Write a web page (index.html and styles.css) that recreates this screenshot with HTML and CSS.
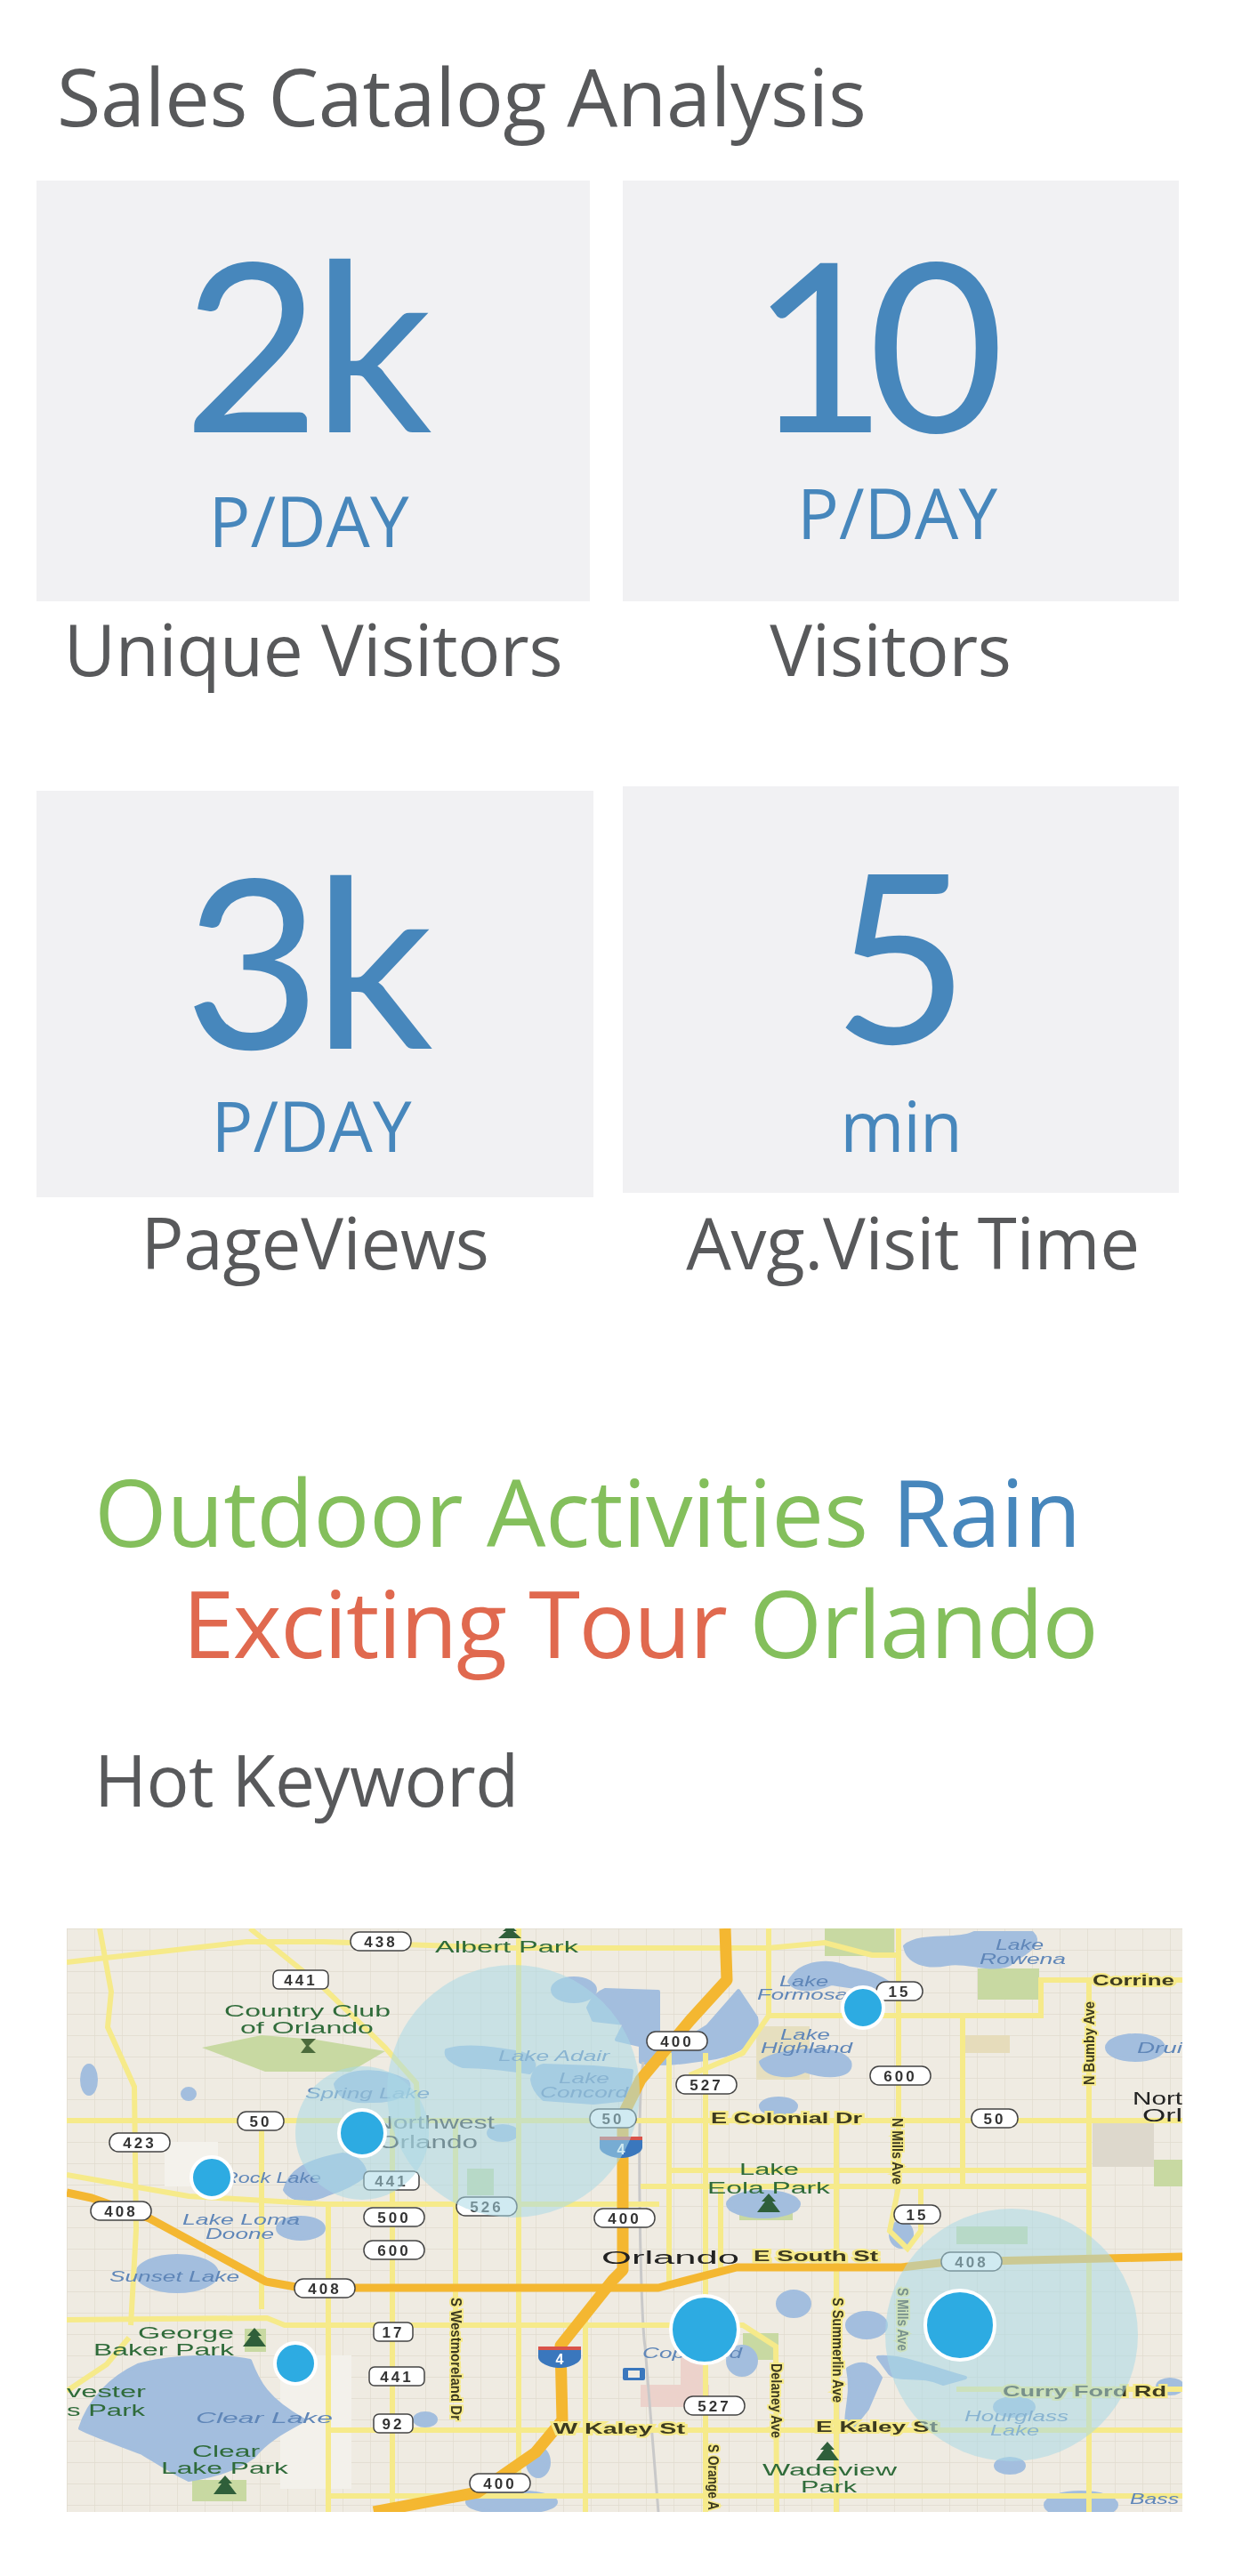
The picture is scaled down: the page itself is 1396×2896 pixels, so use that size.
FILE: index.html
```html
<!DOCTYPE html>
<html lang="en">

<head>
    <meta charset="UTF-8">
    <title>Sales Catalog Analysis</title>
    <link rel="stylesheet" href="styles.css">
</head>

<body>
    <h1 class="page-title">Sales Catalog Analysis</h1>

    <section class="stats-row">
        <div class="stat col-left">
            <div class="stat-box box-a">
                <div class="num num-two">2k</div>
                <div class="unit unit-a">P/DAY</div>
            </div>
            <div class="stat-label">Unique Visitors</div>
        </div>
        <div class="stat col-right">
            <div class="stat-box box-b">
                <div class="num num-ten">10</div>
                <div class="unit unit-b">P/DAY</div>
            </div>
            <div class="stat-label label-visitors">Visitors</div>
        </div>
    </section>

    <section class="stats-row row-2">
        <div class="stat col-left">
            <div class="stat-box box-c">
                <div class="num num-three">3k</div>
                <div class="unit unit-c">P/DAY</div>
            </div>
            <div class="stat-label label-c">PageViews</div>
        </div>
        <div class="stat col-right">
            <div class="stat-box box-d">
                <div class="num num-five">5</div>
                <div class="unit unit-d">min</div>
            </div>
            <div class="stat-label label-d">Avg.Visit Time</div>
        </div>
    </section>

    <section class="keywords">
        <div class="kw-line"><span class="green">Outdoor Activities</span> <span class="blue">Rain</span></div>
        <div class="kw-line kw-line-2"><span class="red">Exciting Tour</span> <span class="green">Orlando</span></div>
    </section>
    <h2 class="section-title">Hot Keyword</h2>

    <div class="map">
        <svg class="map-svg" viewBox="0 0 1254 656" width="1254" height="656">
            <defs>
                <pattern id="minor" width="31" height="24" patternUnits="userSpaceOnUse">
                    <path d="M0 0H31M0 0V24" stroke="#dcd6c8" stroke-width="1.4" fill="none" />
                </pattern>
            </defs>
            <g class="map-base">
                <rect width="1254" height="656" fill="#efebe2" />
                <rect width="1254" height="656" fill="url(#minor)" opacity=".75" />

                <!-- parks and areas -->
                <path class="park" d="M152 134L219 120L280 125L358 138L319 161L223 161Z" />
                <rect class="park" x="1024" y="45" width="69" height="35" />
                <rect class="park" x="852" y="0" width="78" height="31" />
                <rect class="park" x="141" y="620" width="61" height="24" />
                <rect class="park" x="200" y="450" width="24" height="26" />
                <rect class="park" x="756" y="300" width="60" height="28" />
                <rect class="park" x="450" y="270" width="30" height="30" />
                <rect class="park" x="1222" y="260" width="32" height="30" />
                <rect class="park" x="760" y="455" width="40" height="30" />
                <rect class="park" x="1000" y="335" width="80" height="20" />
                <rect x="1153" y="214" width="69" height="54" fill="#ddd8cc" />
                <rect x="645" y="513" width="77" height="25" fill="#ecd2cb" />
                <rect x="690" y="480" width="30" height="40" fill="#ecd2cb" />
                <rect x="775" y="110" width="60" height="60" fill="#e6dfbf" />
                <rect x="1010" y="120" width="50" height="20" fill="#e6dcbb" />
                <rect x="110" y="240" width="60" height="50" fill="#f4f2ec" />
                <rect x="240" y="480" width="80" height="150" fill="#f3f1eb" />

                <!-- lakes -->
                <path class="lake" d="M15 562C25 530 50 505 80 491C110 482 170 478 206 486C215 510 225 530 267 553C245 565 225 575 210 594C195 605 170 615 137 620C120 612 105 602 85 590C60 580 35 572 15 562Z" />
                <path class="lake" d="M245 294C250 275 265 262 310 254C325 255 335 265 336 277C320 290 305 295 295 298C280 305 255 310 245 294Z" />
                <path class="lake" d="M302 175C310 160 350 155 383 172C390 185 370 195 340 194C320 195 305 190 302 175Z" />
                <path class="lake" d="M427 137C450 130 480 135 510 140C525 145 530 155 520 162C495 158 470 155 445 155C432 150 425 145 427 137Z" />
                <path class="lake" d="M523 170C525 160 530 155 536 154L592 156L635 160L631 192L592 196L536 192C528 185 524 178 523 170Z" />
                <path class="lake" d="M586 89C590 80 597 72 605 69L665 71V136L618 125L627 107L592 103Z" />
                <ellipse class="lake" cx="570" cy="69" rx="24" ry="13" />
                <ellipse class="lake" cx="263" cy="337" rx="26" ry="12" />
                <ellipse class="lake" cx="124" cy="388" rx="45" ry="20" />
                <path class="lake" d="M812 60C825 35 860 35 880 45C905 50 915 55 925 62C900 70 880 65 860 62C840 70 820 72 812 60Z" />
                <path class="lake" d="M645 100L680 135L720 110L755 70L775 100C780 125 755 140 730 145C700 150 665 155 645 150Z" />
                <path class="lake" d="M780 150C800 135 870 130 880 150C885 165 860 170 830 160C810 170 785 165 780 150Z" />
                <path class="lake" d="M942 20C960 5 1000 15 1020 5L1085 5C1100 20 1070 30 1060 40C1040 50 1010 35 990 40C965 45 945 38 942 20Z" />
                <ellipse class="lake" cx="1201" cy="134" rx="32" ry="14" />
                <ellipse class="lake" cx="783" cy="310" rx="40" ry="14" />
                <ellipse class="lake" cx="817" cy="422" rx="18" ry="14" />
                <ellipse class="lake" cx="899" cy="446" rx="22" ry="14" />
                <path class="lake" d="M878 495C895 485 905 490 915 505L900 540L880 565C870 550 885 530 878 495Z" />
                <path class="lake" d="M912 482C935 480 960 490 1010 505L985 512C960 500 935 510 925 500Z" />
                <ellipse class="lake" cx="1065" cy="538" rx="22" ry="10" />
                <ellipse class="lake" cx="759" cy="486" rx="16" ry="16" />
                <ellipse class="lake" cx="938" cy="344" rx="12" ry="14" />
                <ellipse class="lake" cx="490" cy="230" rx="16" ry="8" />
                <ellipse class="lake" cx="403" cy="552" rx="12" ry="7" />
                <ellipse class="lake" cx="800" cy="200" rx="20" ry="9" />
                <ellipse class="lake" cx="1140" cy="648" rx="40" ry="14" />
                <ellipse class="lake" cx="530" cy="600" rx="12" ry="16" />
                <ellipse class="lake" cx="1240" cy="515" rx="14" ry="8" />
                <ellipse class="lake" cx="500" cy="645" rx="50" ry="12" />
                <ellipse class="lake" cx="1060" cy="604" rx="16" ry="8" />
                <ellipse class="lake" cx="25" cy="170" rx="8" ry="16" />
                <ellipse class="lake" cx="137" cy="186" rx="7" ry="6" />

                <path class="rail" d="M648 150C640 200 645 440 650 470L665 656" />

                <!-- streets -->
                <g class="road">
                    <path d="M0 216H1254" />
                    <path d="M0 38L202 15L289 15L501 22H789L852 16L905 30H935" />
                    <path d="M37 0L50 71L46 111L76 178L78 339L72 446" />
                    <path d="M206 0L289 67L358 134L393 174L395 214" />
                    <path d="M0 277L137 301L289 310H666" />
                    <path d="M219 216V428" />
                    <path d="M294 310V656" />
                    <path d="M366 216V656" />
                    <path d="M437 216V440" />
                    <path d="M508 0V620" />
                    <path d="M583 440V656" />
                    <path d="M0 440L225 438L245 446H760L797 470L798 656" />
                    <path d="M297 564H1254" />
                    <path d="M297 638H1254" />
                    <path d="M677 140V400" />
                    <path d="M718 140V656" />
                    <path d="M735 290V385" />
                    <path d="M789 0V98L760 140L700 165" />
                    <path d="M865 216V656" />
                    <path d="M935 0V290L925 340L945 360L960 340V290" />
                    <path d="M1007 98V290" />
                    <path d="M1149 58V656" />
                    <path d="M789 98H1095V58H1254" />
                    <path d="M680 272H1150" />
                    <path d="M645 290H1150" />
                    <path d="M1000 518H1254" />
                    <path d="M0 520L45 490L70 460" />
                </g>

                <!-- highways -->
                <g class="highway">
                    <path class="hw-cross" d="M0 297L28 303L93 326L224 397L263 404H665L753 381H938L990 375L1254 369" />
                    <path class="hw-north" d="M740 0L742 58L701 103L645 170L625 210V384L614 395L555 469L557 553L527 589L462 634L345 656" />
                </g>

                <!-- trees and small icons -->
                <g class="tree">
                    <path d="M211 449L219 458H215L224 470H198L207 458H203Z" />
                    <path d="M178 615L186 624H182L191 636H165L174 624H170Z" />
                    <path d="M789 298L797 307H793L802 319H776L785 307H781Z" />
                    <path d="M855 577L863 586H859L868 598H842L851 586H847Z" />
                    <path d="M498 -4L506 3H502L511 11H485L494 3H490Z" />
                </g>
                <path d="M263 124H280L272 132L280 140H263L269 132Z" fill="#4c6b3c" />
                <rect x="625" y="494" width="25" height="14" rx="2" fill="#3a77bd" />
                <rect x="631" y="497" width="13" height="8" fill="#efebe2" />

                <!-- water labels -->
                <g class="lbl-water">
                    <text x="485" y="149" textLength="125" lengthAdjust="spacingAndGlyphs">Lake Adair</text>
                    <text x="553" y="174" textLength="57" lengthAdjust="spacingAndGlyphs">Lake</text>
                    <text x="532" y="190" textLength="99" lengthAdjust="spacingAndGlyphs">Concord</text>
                    <text x="268" y="191" textLength="140" lengthAdjust="spacingAndGlyphs">Spring Lake</text>
                    <text x="176" y="286" textLength="110" lengthAdjust="spacingAndGlyphs">Rock Lake</text>
                    <text x="130" y="333" textLength="132" lengthAdjust="spacingAndGlyphs">Lake Loma</text>
                    <text x="156" y="349" textLength="77" lengthAdjust="spacingAndGlyphs">Doone</text>
                    <text x="48" y="397" textLength="146" lengthAdjust="spacingAndGlyphs">Sunset Lake</text>
                    <text x="145" y="556" textLength="154" lengthAdjust="spacingAndGlyphs">Clear Lake</text>
                    <text x="801" y="65" textLength="55" lengthAdjust="spacingAndGlyphs">Lake</text>
                    <text x="776" y="80" textLength="102" lengthAdjust="spacingAndGlyphs">Formosa</text>
                    <text x="802" y="125" textLength="56" lengthAdjust="spacingAndGlyphs">Lake</text>
                    <text x="780" y="140" textLength="103" lengthAdjust="spacingAndGlyphs">Highland</text>
                    <text x="1044" y="24" textLength="54" lengthAdjust="spacingAndGlyphs">Lake</text>
                    <text x="1026" y="40" textLength="97" lengthAdjust="spacingAndGlyphs">Rowena</text>
                    <text x="1203" y="140" textLength="51" lengthAdjust="spacingAndGlyphs">Drui</text>
                    <text x="1009" y="554" textLength="117" lengthAdjust="spacingAndGlyphs">Hourglass</text>
                    <text x="1038" y="570" textLength="55" lengthAdjust="spacingAndGlyphs">Lake</text>
                    <text x="1195" y="647" textLength="55" lengthAdjust="spacingAndGlyphs">Bass</text>
                    <text x="647" y="483" textLength="112" lengthAdjust="spacingAndGlyphs">Copeland</text>
                </g>

                <!-- park labels -->
                <g class="lbl-park">
                    <text x="414" y="27" textLength="161" lengthAdjust="spacingAndGlyphs">Albert Park</text>
                    <text x="177" y="99" textLength="187" lengthAdjust="spacingAndGlyphs">Country Club</text>
                    <text x="195" y="118" textLength="150" lengthAdjust="spacingAndGlyphs">of Orlando</text>
                    <text x="80" y="461" textLength="108" lengthAdjust="spacingAndGlyphs">George</text>
                    <text x="30" y="480" textLength="158" lengthAdjust="spacingAndGlyphs">Baker Park</text>
                    <text x="0" y="527" textLength="89" lengthAdjust="spacingAndGlyphs">vester</text>
                    <text x="0" y="548" textLength="88" lengthAdjust="spacingAndGlyphs">s Park</text>
                    <text x="141" y="594" textLength="76" lengthAdjust="spacingAndGlyphs">Clear</text>
                    <text x="106" y="613" textLength="143" lengthAdjust="spacingAndGlyphs">Lake Park</text>
                    <text x="756" y="277" textLength="67" lengthAdjust="spacingAndGlyphs">Lake</text>
                    <text x="720" y="298" textLength="138" lengthAdjust="spacingAndGlyphs">Eola Park</text>
                    <text x="782" y="615" textLength="151" lengthAdjust="spacingAndGlyphs">Wadeview</text>
                    <text x="825" y="634" textLength="63" lengthAdjust="spacingAndGlyphs">Park</text>
                </g>

                <!-- city labels -->
                <g class="lbl-city">
                    <text x="601" y="377" textLength="155" lengthAdjust="spacingAndGlyphs">Orlando</text>
                    <text x="1198" y="198" textLength="56" lengthAdjust="spacingAndGlyphs">Nort</text>
                    <text x="1209" y="217" textLength="45" lengthAdjust="spacingAndGlyphs">Orl</text>
                </g>
                <g class="lbl-nw">
                    <text x="345" y="225" textLength="136" lengthAdjust="spacingAndGlyphs">Northwest</text>
                    <text x="350" y="247" textLength="112" lengthAdjust="spacingAndGlyphs">Orlando</text>
                </g>

                <!-- street labels -->
                <g class="lbl-road">
                    <text x="1153" y="64" textLength="92" lengthAdjust="spacingAndGlyphs">Corrine</text>
                    <text x="724" y="219" textLength="170" lengthAdjust="spacingAndGlyphs">E Colonial Dr</text>
                    <text x="772" y="374" textLength="140" lengthAdjust="spacingAndGlyphs">E South St</text>
                    <text x="1052" y="526" textLength="184" lengthAdjust="spacingAndGlyphs">Curry Ford Rd</text>
                    <text x="842" y="566" textLength="137" lengthAdjust="spacingAndGlyphs">E Kaley St</text>
                    <text x="547" y="568" textLength="148" lengthAdjust="spacingAndGlyphs">W Kaley St</text>
                    <text transform="translate(432 415) rotate(90)" textLength="138" lengthAdjust="spacingAndGlyphs">S Westmoreland Dr</text>
                    <text transform="translate(928 213) rotate(90)" textLength="75" lengthAdjust="spacingAndGlyphs">N Mills Ave</text>
                    <text transform="translate(1155 176) rotate(-90)" textLength="94" lengthAdjust="spacingAndGlyphs">N Bumby Ave</text>
                    <text transform="translate(934 404) rotate(90)" textLength="71" lengthAdjust="spacingAndGlyphs">S Mills Ave</text>
                    <text transform="translate(861 415) rotate(90)" textLength="118" lengthAdjust="spacingAndGlyphs">S Summerlin Ave</text>
                    <text transform="translate(792 489) rotate(90)" textLength="84" lengthAdjust="spacingAndGlyphs">Delaney Ave</text>
                    <text transform="translate(721 580) rotate(90)" textLength="74" lengthAdjust="spacingAndGlyphs">S Orange A</text>
                </g>

                <!-- route shields -->
                <g class="shield">
                    <rect x="319" y="4" width="68" height="21" rx="10" /><text x="353" y="21">438</text>
                    <rect x="232" y="47" width="62" height="21" rx="6" /><text x="263" y="64">441</text>
                    <rect x="192" y="206" width="52" height="21" rx="10" /><text x="218" y="223">50</text>
                    <rect x="48" y="230" width="68" height="21" rx="10" /><text x="82" y="247">423</text>
                    <rect x="334" y="273" width="62" height="21" rx="6" /><text x="365" y="290">441</text>
                    <rect x="27" y="307" width="68" height="21" rx="10" /><text x="61" y="324">408</text>
                    <rect x="334" y="314" width="68" height="21" rx="10" /><text x="368" y="331">500</text>
                    <rect x="438" y="302" width="68" height="21" rx="10" /><text x="472" y="319">526</text>
                    <rect x="334" y="351" width="68" height="21" rx="10" /><text x="368" y="368">600</text>
                    <rect x="256" y="394" width="68" height="21" rx="10" /><text x="290" y="411">408</text>
                    <rect x="345" y="443" width="44" height="21" rx="6" /><text x="367" y="460">17</text>
                    <rect x="340" y="493" width="62" height="21" rx="6" /><text x="371" y="510">441</text>
                    <rect x="345" y="546" width="44" height="21" rx="6" /><text x="367" y="563">92</text>
                    <rect x="453" y="613" width="68" height="21" rx="10" /><text x="487" y="630">400</text>
                    <rect x="588" y="203" width="52" height="21" rx="10" /><text x="614" y="220">50</text>
                    <rect x="593" y="315" width="68" height="21" rx="10" /><text x="627" y="332">400</text>
                    <rect x="910" y="60" width="52" height="21" rx="10" /><text x="936" y="77">15</text>
                    <rect x="652" y="116" width="68" height="21" rx="10" /><text x="686" y="133">400</text>
                    <rect x="903" y="155" width="68" height="21" rx="10" /><text x="937" y="172">600</text>
                    <rect x="685" y="165" width="68" height="21" rx="10" /><text x="719" y="182">527</text>
                    <rect x="1017" y="203" width="52" height="21" rx="10" /><text x="1043" y="220">50</text>
                    <rect x="930" y="311" width="52" height="21" rx="10" /><text x="956" y="328">15</text>
                    <rect x="983" y="364" width="68" height="21" rx="10" /><text x="1017" y="381">408</text>
                    <rect x="694" y="526" width="68" height="21" rx="10" /><text x="728" y="543">527</text>
                </g>

                <!-- interstate shields -->
                <g class="interstate">
                    <path d="M599 234H647V246C647 252 635 258 623 258C611 258 599 252 599 246Z" />
                    <rect class="i-top" x="599" y="234" width="48" height="4" />
                    <text x="623" y="254">4</text>
                    <path d="M530 470H578V482C578 488 566 494 554 494C542 494 530 488 530 482Z" />
                    <rect class="i-top" x="530" y="470" width="48" height="4" />
                    <text x="554" y="490">4</text>
                </g>
            </g>

            <!-- data overlay -->
            <g class="bubble">
                <circle cx="502" cy="183" r="142" />
                <circle cx="332" cy="230" r="75" />
                <circle cx="1062" cy="457" r="142" />
            </g>
            <g class="pin">
                <circle cx="332" cy="230" r="26" />
                <circle cx="163" cy="280" r="23" />
                <circle cx="257" cy="489" r="23" />
                <circle cx="895" cy="89" r="23" />
                <circle cx="717" cy="451" r="38" />
                <circle cx="1004" cy="446" r="39" />
            </g>
        </svg>
    </div>
</body>

</html>
```

FILE: styles.css
```css
body {
    margin: 0;
    background-color: #fff;
    font-family: "Open Sans", "Liberation Sans", sans-serif;
    font-variant-ligatures: none;
    color: #58595b;
}

.page-title {
    margin: 57px 0 46px;
    padding-left: 64px;
    font-size: 90px;
    line-height: 100px;
    font-weight: 400;
    letter-spacing: -0.25px;
}

.stats-row {
    display: flex;
    padding-left: 41px;
}

.row-2 {
    margin-top: 110px;
}

.col-left {
    width: 659px;
}

.col-right {
    width: 625px;
}

.stat-box {
    background-color: #f1f1f3;
    box-sizing: border-box;
    text-align: center;
    color: #4787bc;
    height: 473px;
}

.box-a {
    width: 622px;
    padding-top: 48px;
}

.box-b {
    padding-top: 48px;
}

.box-c {
    width: 626px;
    height: 457px;
    margin-top: 5px;
    padding-top: 55px;
}

.box-d {
    height: 457px;
    padding-top: 54px;
}

.num {
    font-family: "Lato", sans-serif;
    font-size: 265px;
    line-height: 265px;
    letter-spacing: -8px;
}

.num-two {
    margin-right: 20px;
}

.num-ten {
    margin-right: 74px;
    letter-spacing: -22px;
}

.num-three {
    margin-right: 22px;
}

.num-five {
    margin-right: 8px;
}

.unit {
    font-size: 78px;
    line-height: 80px;
}

.unit-a {
    margin: 29px 10px 0 0;
}

.unit-b {
    margin: 20px 8px 0 0;
}

.unit-c {
    margin: 16px 8px 0 0;
}

.unit-d {
    margin: 22px 0 0 0;
    letter-spacing: -1px;
}

.stat-label {
    width: 622px;
    margin-top: 8px;
    text-align: center;
    font-size: 80px;
    line-height: 90px;
    letter-spacing: -0.3px;
}

.label-visitors {
    width: 602px;
}

.label-c {
    width: 626px;
    margin-top: 5px;
}

.label-d {
    width: 652px;
    margin-top: 10px;
}

.keywords {
    margin-top: 195px;
    padding-left: 106px;
    font-size: 105px;
    line-height: 125px;
}

.kw-line {
    white-space: nowrap;
    letter-spacing: -0.4px;
}

.kw-line-2 {
    padding-left: 99px;
    letter-spacing: -1.5px;
}

.green {
    color: #84bf5c;
}

.blue {
    color: #4787bc;
}

.red {
    color: #e0694f;
}

.section-title {
    margin: 69px 0 123px;
    padding-left: 106px;
    font-size: 80px;
    line-height: 90px;
    font-weight: 400;
    letter-spacing: -0.5px;
}

.map {
    width: 1254px;
    height: 656px;
    margin-left: 75px;
    margin-bottom: 72px;
}

.map-svg {
    display: block;
    font-family: "Liberation Sans", sans-serif;
}

.map-base {
    filter: blur(0.6px);
}

.park {
    fill: #c8d9a2;
}

.lake {
    fill: #a3bede;
    stroke: #a3bede;
    stroke-width: 4;
    stroke-linejoin: round;
}

.rail {
    fill: none;
    stroke: #c9c9c9;
    stroke-width: 3;
}

.road path {
    fill: none;
    stroke: #f6ea8a;
    stroke-width: 6;
}

.highway path {
    fill: none;
    stroke: #f4b731;
    stroke-linejoin: round;
}

.hw-cross {
    stroke-width: 9;
}

.hw-north {
    stroke-width: 13;
}

.tree path {
    fill: #2f5f3a;
}

.lbl-water text {
    font-size: 17px;
    font-style: italic;
    fill: #5f86b8;
}

.lbl-park text {
    font-size: 18px;
    fill: #2f6b3a;
}

.lbl-city text {
    font-size: 20px;
    fill: #222;
}

.lbl-nw text {
    font-size: 20px;
    fill: #333;
}

.lbl-road text {
    font-size: 17px;
    font-weight: bold;
    fill: #3c3a20;
    stroke: #f6ea8a;
    stroke-width: 4px;
    paint-order: stroke;
}

.shield rect {
    fill: #fff;
    stroke: #444;
    stroke-width: 1.5;
}

.shield text {
    font-size: 17px;
    font-weight: bold;
    text-anchor: middle;
    fill: #333;
    letter-spacing: 3px;
}

.interstate path {
    fill: #3a77bd;
}

.i-top {
    fill: #d9534a;
}

.interstate text {
    font-size: 16px;
    font-weight: bold;
    text-anchor: middle;
    fill: #fff;
}

.bubble circle {
    fill: #a9d8e6;
    fill-opacity: 0.55;
}

.pin circle {
    fill: #2dabe2;
    stroke: #fff;
    stroke-width: 4;
}
```
